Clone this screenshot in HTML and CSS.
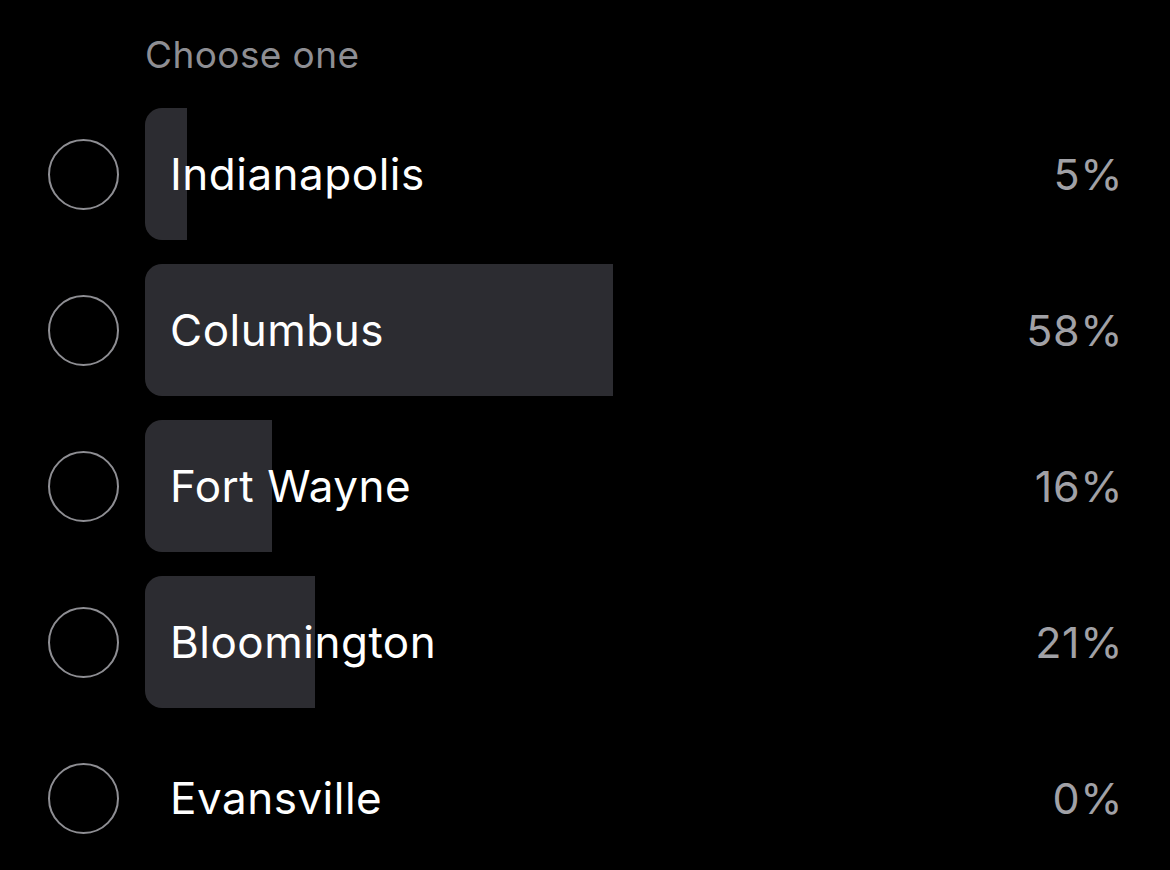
FILE: index.html
```html
<!DOCTYPE html>
<html>
<head>
<meta charset="utf-8">
<link rel="stylesheet" href="styles.css">
</head>
<body>
<div class="poll">
  <div class="title">Choose one</div>
  <div class="options">
    <div class="row">
      <span class="radio"></span>
      <div class="option">
        <div class="fill" style="width:42px"></div>
        <span class="label">Indianapolis</span>
        <span class="pct">5%</span>
      </div>
    </div>
    <div class="row">
      <span class="radio"></span>
      <div class="option">
        <div class="fill" style="width:468px"></div>
        <span class="label">Columbus</span>
        <span class="pct">58%</span>
      </div>
    </div>
    <div class="row">
      <span class="radio"></span>
      <div class="option">
        <div class="fill" style="width:127px"></div>
        <span class="label">Fort Wayne</span>
        <span class="pct">16%</span>
      </div>
    </div>
    <div class="row">
      <span class="radio"></span>
      <div class="option">
        <div class="fill" style="width:170px"></div>
        <span class="label">Bloomington</span>
        <span class="pct">21%</span>
      </div>
    </div>
    <div class="row">
      <span class="radio"></span>
      <div class="option">
        <span class="label">Evansville</span>
        <span class="pct">0%</span>
      </div>
    </div>
  </div>
</div>
</body>
</html>
```

FILE: styles.css
```css
html, body {
  margin: 0;
  padding: 0;
  background: #000;
}
body {
  width: 1170px;
  height: 870px;
  overflow: hidden;
  font-family: Inter, "Noto Sans", "Liberation Sans", sans-serif;
  -webkit-font-smoothing: antialiased;
}
.poll {
  padding: 30px 50px 0 48px;
}
.title {
  margin-left: 97px;
  color: #8e8e93;
  font-size: 37px;
  line-height: 50px;
  height: 50px;
  letter-spacing: 0.4px;
}
.options {
  margin-top: 28px;
  display: flex;
  flex-direction: column;
  gap: 24px;
}
.row {
  display: flex;
  align-items: center;
  height: 132px;
  gap: 26px;
}
.radio {
  flex: none;
  width: 67px;
  height: 67px;
  border: 2.5px solid #8e8e93;
  border-radius: 50%;
}
.option {
  position: relative;
  flex: 1;
  height: 132px;
  display: flex;
  align-items: center;
  justify-content: space-between;
}
.fill {
  position: absolute;
  left: 0;
  top: 0;
  bottom: 0;
  background: #2c2c31;
  border-radius: 17px 0 0 17px;
}
.label {
  position: relative;
  padding-left: 25px;
  color: #fff;
  font-size: 44px;
  letter-spacing: 0.5px;
}
.pct {
  position: relative;
  color: #a1a1a6;
  font-size: 43px;
  letter-spacing: 0.6px;
  margin-right: -3px;
}
```
